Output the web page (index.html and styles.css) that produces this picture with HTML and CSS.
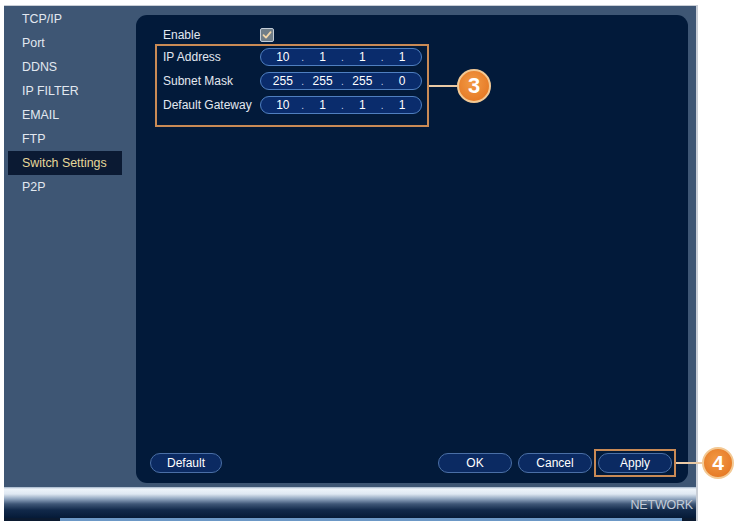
FILE: index.html
```html
<!DOCTYPE html>
<html lang="en">
    <head>
        <meta charset="UTF-8">
        <meta name="viewport" content="width=device-width, initial-scale=1.0">
        <title>Switch Settings</title>
        <link rel="stylesheet" href="styles.css">
    </head>
    <body>
        <div class="screen">
            <div class="main">
                <ul class="menu">
                    <li>TCP/IP</li>
                    <li>Port</li>
                    <li>DDNS</li>
                    <li>IP FILTER</li>
                    <li>EMAIL</li>
                    <li>FTP</li>
                    <li class="active">Switch Settings</li>
                    <li>P2P</li>
                </ul>
                <div class="panel">
                    <div class="row enable-row">
                        <span class="label">Enable</span>
                        <span class="check">
                            <svg width="10" height="10" viewBox="0 0 10 10"><path d="M1.5 5.2 L4 7.6 L8.6 2.2" fill="none" stroke="#f3d6a8" stroke-width="1.8" stroke-linecap="round" stroke-linejoin="round"/></svg>
                        </span>
                    </div>
                    <div class="ip-box">
                        <div class="row">
                            <span class="label">IP Address</span>
                            <div class="field"><span>10</span><i>.</i><span>1</span><i>.</i><span>1</span><i>.</i><span>1</span></div>
                        </div>
                        <div class="row">
                            <span class="label">Subnet Mask</span>
                            <div class="field"><span>255</span><i>.</i><span>255</span><i>.</i><span>255</span><i>.</i><span>0</span></div>
                        </div>
                        <div class="row">
                            <span class="label">Default Gateway</span>
                            <div class="field"><span>10</span><i>.</i><span>1</span><i>.</i><span>1</span><i>.</i><span>1</span></div>
                        </div>
                        <div class="callout callout-3"><b class="line"></b><b class="badge">3</b></div>
                    </div>
                    <div class="buttons">
                        <button class="btn btn-default">Default</button>
                        <span class="spacer"></span>
                        <button class="btn">OK</button>
                        <button class="btn">Cancel</button>
                        <div class="apply-box">
                            <button class="btn">Apply</button>
                            <div class="callout callout-4"><b class="line"></b><b class="badge">4</b></div>
                        </div>
                    </div>
                </div>
            </div>
            <div class="bottom-bar">
                <span class="network">NETWORK</span>
            </div>
        </div>
    </body>
</html>
```
FILE: styles.css
```css
body { margin: 0; background: #fff; font-family: "Liberation Sans", Arial, sans-serif; font-size: 12px; }
.screen { margin: 5px 0 0 4px; width: 692px; border-top: 1px solid #c9ced6; box-shadow: 2px 0 0 #c9ced6; }
.main { display: flex; height: 481px; background: #3e5674; padding-right: 8px; }

.menu { list-style: none; margin: 0; padding: 1px 0 0 4px; width: 128px; }
.menu li { height: 24px; line-height: 24px; width: 100px; padding-left: 14px; color: #e2e8f0; font-size: 12.4px; }
.menu li.active { background: #0b1a33; color: #e6d89a; }

.panel { flex: 1; position: relative; display: flex; flex-direction: column; margin: 9px 0 4px 0; padding: 13px 16px 10px 19px; background: #021a3a; border-radius: 11px; }
.row { display: flex; align-items: center; color: #e2e8f0; }
.row .label { width: 97px; }
.enable-row { height: 14px; padding-left: 8px; margin-bottom: 2px; }
.check { display: flex; align-items: center; justify-content: center; width: 12px; height: 12px; border: 1px solid #c3ccd6; border-radius: 2px; background: #6f7d88; }

.ip-box { position: relative; width: 263px; padding: 2px 1px 5px 6px; border: 2px solid #c98a55; }
.ip-box .row { height: 18px; margin-bottom: 6px; }
.ip-box .row:last-of-type { margin-bottom: 0; }
.field { box-sizing: border-box; display: grid; grid-template-columns: 1fr 4px 1fr 4px 1fr 4px 1fr; align-items: center; width: 162px; height: 18px; padding: 0 1px 0 4px; border: 1.5px solid #4f7fc0; border-radius: 9px; background: #0a2c6c; color: #fff; }
.field span { text-align: center; }
.field i { font-style: normal; text-align: center; color: #c8d4e8; font-size: 10px; line-height: 15px; }

.callout { position: absolute; left: 100%; top: 50%; display: flex; align-items: center; transform: translateY(-50%); margin-left: 2px; }
.callout .line { width: 28px; height: 2px; background: #e9c9a5; }
.badge { display: flex; align-items: center; justify-content: center; width: 30px; height: 30px; border: 2px solid #f3c994; border-radius: 50%; background: radial-gradient(circle at 45% 40%, #f29a45, #e2701c); color: #fff; font-size: 22px; font-weight: bold; }
.callout-4 .line { width: 26px; }
.callout-4 .badge { width: 28px; height: 28px; font-size: 21px; }

.buttons { display: flex; align-items: center; gap: 6px; margin-top: auto; }
.spacer { flex: 1; }
.btn { flex: none; box-sizing: border-box; width: 74px; height: 20px; padding: 0; border: 1.5px solid #4a6fa6; border-radius: 10px; background: #0b2a62; color: #fff; font-family: inherit; font-size: 12px; }
.btn-default { width: 72px; margin-left: -5px; }
.apply-box { flex: none; position: relative; display: flex; margin: -4px -4px -4px -4px; padding: 2px; border: 2px solid #c98a55; }

.bottom-bar { position: relative; display: flex; align-items: center; justify-content: flex-end; height: 31px; padding-right: 3px; border-bottom: 3px solid #6c98c6; background: linear-gradient(to bottom, #9fb2c8 0, #eef4fa 2px, #dfe8f2 7px, #8ea3bd 12px, #3e5676 17px, #11294a 23px, #051a37 31px); }
.bottom-bar::before, .bottom-bar::after { content: ""; position: absolute; bottom: -3px; height: 3px; background: #0b1a30; }
.bottom-bar::before { left: 0; width: 56px; }
.bottom-bar::after { right: 0; width: 14px; }
.network { margin-top: 4px; color: #c3ccd8; font-size: 12.5px; letter-spacing: -0.2px; }
```
